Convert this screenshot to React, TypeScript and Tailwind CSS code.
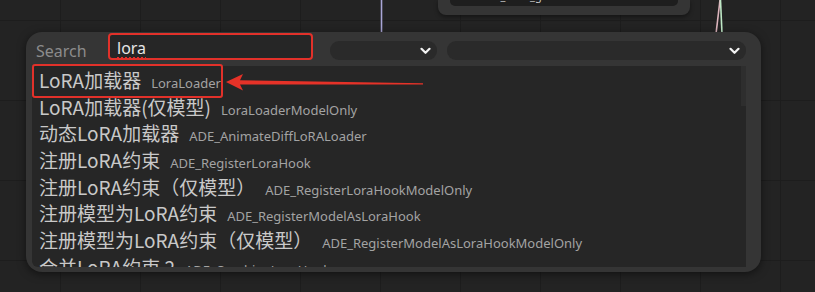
import React from "react";

const rows: [string, string][] = [
  ["LoRA加载器", "LoraLoader"],
  ["LoRA加载器(仅模型)", "LoraLoaderModelOnly"],
  ["动态LoRA加载器", "ADE_AnimateDiffLoRALoader"],
  ["注册LoRA约束", "ADE_RegisterLoraHook"],
  ["注册LoRA约束（仅模型）", "ADE_RegisterLoraHookModelOnly"],
  ["注册模型为LoRA约束", "ADE_RegisterModelAsLoraHook"],
  ["注册模型为LoRA约束（仅模型）", "ADE_RegisterModelAsLoraHookModelOnly"],
  ["合并LoRA约束 2", "ADE_CombineLoraHooks"],
];

function Chevron() {
  return (
    <svg width="11" height="8" viewBox="0 0 11 8" className="shrink-0">
      <path d="M1.5 1.8 L5.5 5.8 L9.5 1.8" fill="none" stroke="#f2f2f2" strokeWidth="2.2" strokeLinecap="round" strokeLinejoin="round" />
    </svg>
  );
}

export default function App() {
  return (
    <div
      className="relative w-[815px] h-[292px] overflow-hidden bg-[#232323] bg-[linear-gradient(to_right,#1d1d1d_1px,transparent_1px),linear-gradient(to_bottom,#1d1d1d_1px,transparent_1px)] bg-[size:80px_80px] bg-[position:60px_20px]"
      style={{ fontFamily: '"Noto Sans", "Noto Sans CJK SC", sans-serif' }}
    >
      {/* node above */}
      <div className="absolute left-[438px] top-0 w-[252px] h-[15px] bg-[#353535] rounded-b-[8px] shadow-[0_2px_4px_rgba(0,0,0,0.4)]">
        <div className="relative mx-[12px] h-[6px] bg-[#1e1e1e] rounded-b-[5px] overflow-hidden">
          <div className="absolute left-[14px] right-[12px] top-[-12px] flex justify-between text-[11px] leading-[16px] text-[#c8c8c8]">
            <span>control_after_generate</span>
            <span>randomize &gt;</span>
          </div>
        </div>
      </div>

      {/* wires */}
      <svg className="absolute left-0 top-0" width="815" height="40">
        <line x1="381.5" y1="0" x2="381.5" y2="34" stroke="#a9a6d6" strokeWidth="1.6" />
        <line x1="720" y1="0" x2="716" y2="34" stroke="#dcb4bc" strokeWidth="1.6" />
        <line x1="720.5" y1="0" x2="722" y2="34" stroke="#bfe8c6" strokeWidth="1.6" />
      </svg>

      {/* search dialog */}
      <div className="absolute left-[26px] top-[32px] w-[735px] h-[240px] rounded-[16px] bg-[#353535] pl-[6px] pr-[15px] pt-[1px] pb-[5px] flex flex-col shadow-[0_2px_8px_rgba(0,0,0,0.5)]">
        <div className="flex items-end h-[27px]">
          <span className="ml-[4px] mb-[-2px] w-[72px] text-[16px] leading-[22px] text-[#8c8c8c]">Search</span>
          <div className="w-[205px] h-[27px] border-[2px] border-[#e2312a] rounded-[4px] bg-[#262626] pl-[7px] flex items-center">
            <span className="mt-[2px] text-[16px] leading-[20px] text-[#e6e6e6] underline decoration-dotted decoration-[#e2312a] decoration-[2px] underline-offset-[4px]">lora</span>
          </div>
          <div className="ml-[17px] w-[107px] h-[19px] rounded-[9px] bg-[#2a2a2a] flex items-center justify-end pr-[6px]">
            <Chevron />
          </div>
          <div className="ml-[10px] flex-1 h-[19px] rounded-[9px] bg-[#2a2a2a] flex items-center justify-end pr-[6px]">
            <Chevron />
          </div>
        </div>
        <div className="mt-[6px] flex-1 bg-[#262626] overflow-hidden pl-[7px] pt-[1px] rounded-bl-[6px] relative">
          <div className="absolute right-0 top-0 w-[5px] h-[40px] bg-[#2e2e2e]" />
          {rows.map(([main, sub], i) => (
            <div key={i} className="h-[26.7px] flex items-baseline whitespace-nowrap">
              <span className="text-[19px] leading-[26.7px] text-[#c9c9c9]" style={{ fontFamily: '"Noto Sans CJK SC", sans-serif' }}>{main}</span>
              <span className="ml-[10px] text-[13px] leading-[26.7px] text-[#a3a3a3]">{sub}</span>
            </div>
          ))}
        </div>
      </div>

      {/* red highlight box */}
      <div className="absolute left-[32px] top-[64px] w-[191px] h-[34px] border-[2.5px] border-[#e2312a] rounded-[3px]" />

      {/* red arrow */}
      <svg className="absolute left-0 top-0" width="815" height="292">
        <polygon points="226,82 243,74 240,80.2 423,83.2 423,84.6 240,84.6 243,90.5" fill="#e63228" />
      </svg>
    </div>
  );
}
